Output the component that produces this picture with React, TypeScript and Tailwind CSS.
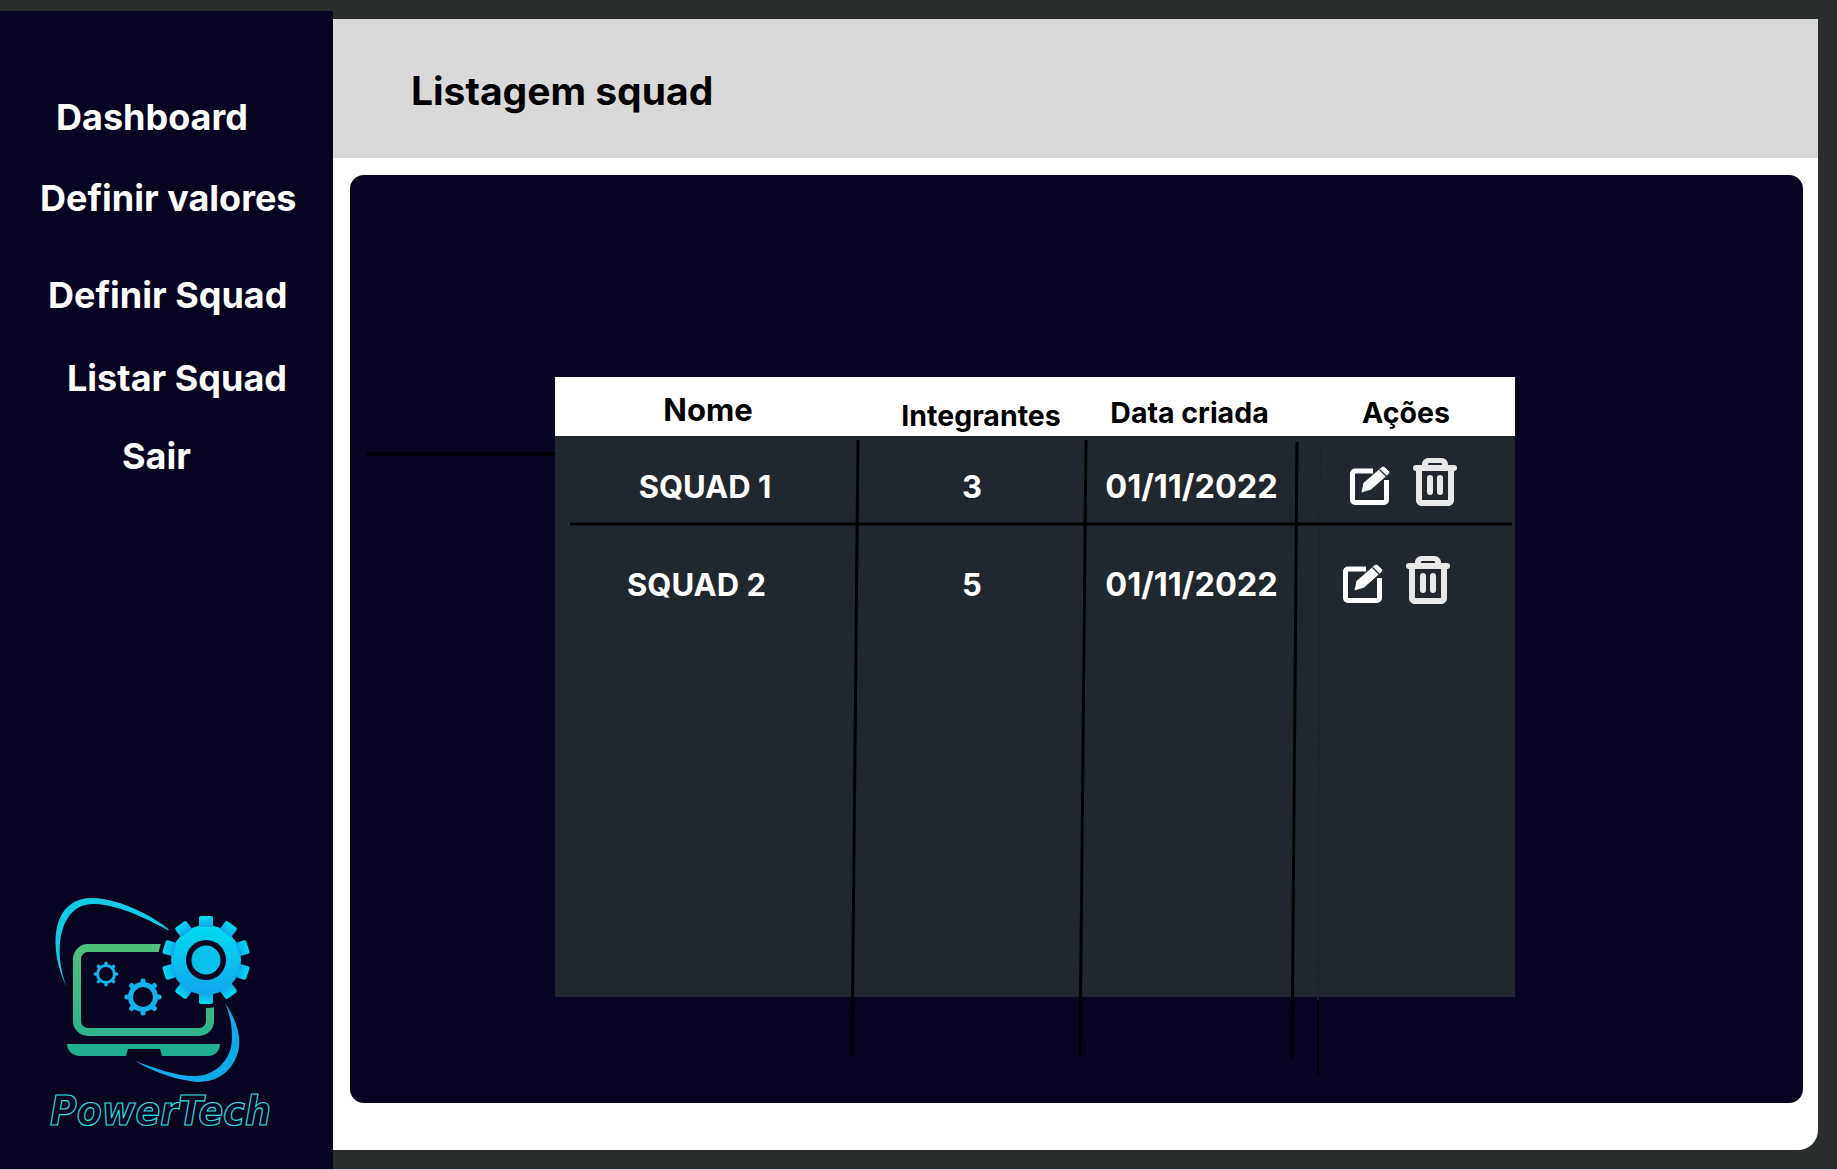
import React from 'react';

const Gear = ({ cx, cy, body, tooth, width, teeth, fill }: { cx: number; cy: number; body: number; tooth: number; width: number; teeth: number; fill: string }) => (
  <g fill={fill}>
    <circle cx={cx} cy={cy} r={body} />
    {Array.from({ length: teeth }).map((_, i) => (
      <rect
        key={i}
        x={cx - width / 2}
        y={cy - tooth}
        width={width}
        height={tooth - body + 2}
        rx={2}
        transform={`rotate(${(i * 360) / teeth} ${cx} ${cy})`}
      />
    ))}
  </g>
);

const Logo = () => (
  <svg width="333" height="310" viewBox="0 0 333 310" className="block">
    <defs>
      <linearGradient id="gearFill" x1="0" y1="0" x2="0" y2="1">
        <stop offset="0" stopColor="#00dcef" />
        <stop offset="1" stopColor="#10a5ec" />
      </linearGradient>
      <linearGradient id="screenFill" x1="0" y1="0" x2="0" y2="1">
        <stop offset="0" stopColor="#4fc07c" />
        <stop offset="1" stopColor="#2db48c" />
      </linearGradient>
    </defs>
    <path d="M67 127C50 95 48 40 90 38C120 37 160 60 173 73C150 60 120 45 95 44C60 42 52 90 67 127Z" fill="#14cbe6" />
    <path d="M225 143C240 165 243 185 235 200C225 220 205 224 190 221C170 218 150 210 135 201C155 208 175 216 195 216C215 216 232 200 232 178C232 165 230 155 225 143Z" fill="#10a9e8" />
    <rect x="77" y="88" width="133" height="84" rx="11" fill="none" stroke="url(#screenFill)" strokeWidth="8" />
    <path d="M67 184H220C220 191 215 196 208 196H162L160 189H128L126 196H80C73 196 67 191 67 184Z" fill="#1fae8e" />
    <circle cx="206" cy="100" r="48" fill="#060420" />
    <Gear cx={206} cy={100} body={35} tooth={44} width={14} teeth={10} fill="url(#gearFill)" />
    <circle cx="206" cy="100" r="20" fill="#060420" />
    <circle cx="206" cy="100" r="14.5" fill="#08c0ea" />
    <Gear cx={106} cy={114} body={10} tooth={12.5} width={3.5} teeth={8} fill="#14b2ea" />
    <circle cx="106" cy="114" r="7" fill="#060420" />
    <Gear cx={143} cy={137} body={15} tooth={18.5} width={5} teeth={8} fill="#14b2ea" />
    <circle cx="143" cy="137" r="10" fill="#060420" />
    <text
      x="50"
      y="265"
      textLength="221"
      lengthAdjust="spacingAndGlyphs"
      fontFamily="'DejaVu Sans', sans-serif"
      fontStyle="italic"
      fontWeight="700"
      fontSize="40"
      fill="#060420"
      stroke="#2fe0e6"
      strokeWidth="1.2"
    >
      PowerTech
    </text>
  </svg>
);

const EditIcon = () => (
  <svg width="40" height="39" viewBox="0 0 40 39" className="mt-[6px]">
    <path d="M23 5H5A2.5 2.5 0 0 0 2.5 7.500V34A2.500 2.500 0 0 0 5 36.500H34A2.500 2.500 0 0 0 36.500 34V14" fill="none" stroke="#fff" strokeWidth="5" />
    <path d="M11 27L13 17L32 0.500Q33.500 0 35 1L39.500 5.500Q40 7 39 8L21 24Z" fill="#fff" stroke="#20272e" strokeWidth="0.8" />
    <path d="M29.500 3.500L36.500 10.500" stroke="#20272e" strokeWidth="1.3" />
  </svg>
);

const TrashIcon = () => (
  <svg width="44" height="48" viewBox="0 0 44 48" fill="#e8e8e8">
    <path d="M9 8V6.500C9 2.500 12 0 16 0H28C32 0 35 2.500 35 6.500V8H29V6.500C29 5.500 28.500 5 27.500 5H16.500C15.500 5 15 5.500 15 6.500V8Z" />
    <rect x="0" y="7" width="44" height="6" rx="3" />
    <path d="M3 11H41V42C41 45.500 38.500 48 35 48H9C5.500 48 3 45.500 3 42ZM9 13V42H35V13Z" fillRule="evenodd" />
    <rect x="14" y="17" width="6" height="20" rx="3" />
    <rect x="24" y="17" width="6" height="20" rx="3" />
  </svg>
);

const Actions = ({ className }: { className: string }) => (
  <div className={`flex items-center justify-center gap-[23px] pt-[2px] ${className}`}>
    <EditIcon />
    <TrashIcon />
  </div>
);

const App: React.FC = () => {
  return (
    <div className="w-[1837px] h-[1170px] bg-[#2a2f2b] border-b border-[#c4c4cc] flex items-start overflow-hidden font-['Inter',sans-serif]">
      {/* sidebar */}
      <aside className="mt-[11px] w-[333px] h-[1159px] bg-[#060420] flex flex-col text-white font-bold text-[36px] leading-[40px]">
        <div className="ml-[56px] mt-[86px]">Dashboard</div>
        <div className="ml-[40px] mt-[41px]">Definir valores</div>
        <div className="ml-[48px] mt-[57px]">Definir Squad</div>
        <div className="ml-[67px] mt-[43px]">Listar Squad</div>
        <div className="ml-[122px] mt-[38px]">Sair</div>
        <div className="mt-auto">
          <Logo />
        </div>
      </aside>

      {/* main */}
      <main className="mt-[19px] w-[1485px] h-[1131px] bg-white rounded-br-[20px] overflow-hidden">
        <header className="h-[139px] bg-[#d9d9d9] flex items-center pl-[78px] pt-[6px]">
          <h1 className="text-[39px] font-bold text-black">Listagem squad</h1>
        </header>

        <section className="relative ml-[17px] mt-[17px] w-[1453px] h-[928px] bg-[#060420] rounded-[14px] pt-[202px] pl-[205px]">
          <div className="w-[960px] h-[620px] bg-[#20272e]">
            <div className="h-[59px] bg-white grid grid-cols-[303px_228px_211px_218px] items-center text-center text-black font-bold text-[28.500px]">
              <div className="pt-[6px] pl-[3px] text-[31px]">Nome</div>
              <div className="pl-[18px] pt-[18px]">Integrantes</div>
              <div className="pt-[12px] pr-[4px]">Data criada</div>
              <div className="pt-[12px]">Ações</div>
            </div>
            <div className="h-[90px] pt-[12px] grid grid-cols-[303px_228px_211px_218px] items-center text-center text-white font-bold text-[31px]">
              <div className="pr-[3px]">SQUAD 1</div>
              <div>3</div>
              <div className="text-[32.500px]">01/11/2022</div>
              <Actions className="pr-[5px] -mt-[12px]" />
            </div>
            <div className="h-[106px] pt-[12px] grid grid-cols-[303px_228px_211px_218px] items-center text-center text-white font-bold text-[31px]">
              <div className="pr-[20px]">SQUAD 2</div>
              <div>5</div>
              <div className="text-[32.500px]">01/11/2022</div>
              <Actions className="pr-[20px] -mt-[12px]" />
            </div>
          </div>

          {/* hand-drawn rules over the table */}
          <svg className="absolute left-0 top-0" width="1453" height="928" viewBox="0 0 1453 928">
            <path d="M205 279H508" stroke="#1d252a" strokeWidth="2" fill="none" />
            <path d="M970 265L968 825" stroke="#1d252a" strokeWidth="2" fill="none" />
            <path d="M968 825L968 900" stroke="#000" strokeWidth="2" fill="none" />
            <g stroke="#000" strokeWidth="3" fill="none">
              <path d="M16 279H205" />
              <path d="M220 349H1162" />
              <path d="M508 265L502 881" />
              <path d="M736 265L730 881" />
              <path d="M947 267L942 883" />
            </g>
          </svg>
        </section>
      </main>
    </div>
  );
};

export default App;
